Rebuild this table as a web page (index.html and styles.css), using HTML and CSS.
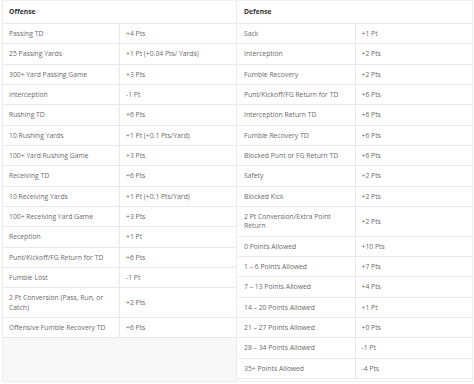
FILE: index.html
```html
<!DOCTYPE html>
<html>
<head>
    <title>Scoring</title>
    <link rel="stylesheet" href="styles.css">
</head>
<body>
    <div class="sheet">
        <div class="panel offense">
            <table class="points">
                <tr><th colspan="2">Offense</th></tr>
                <tr><td>Passing TD</td><td>+4 Pts</td></tr>
                <tr><td>25 Passing Yards</td><td>+1 Pt (+0.04 Pts/ Yards)</td></tr>
                <tr><td>300+ Yard Passing Game</td><td>+3 Pts</td></tr>
                <tr><td>Interception</td><td>-1 Pt</td></tr>
                <tr><td>Rushing TD</td><td>+6 Pts</td></tr>
                <tr><td>10 Rushing Yards</td><td>+1 Pt (+0.1 Pts/Yard)</td></tr>
                <tr><td>100+ Yard Rushing Game</td><td>+3 Pts</td></tr>
                <tr><td>Receiving TD</td><td>+6 Pts</td></tr>
                <tr><td>10 Receiving Yards</td><td>+1 Pt (+0.1 Pts/Yard)</td></tr>
                <tr><td>100+ Receiving Yard Game</td><td>+3 Pts</td></tr>
                <tr><td>Reception</td><td>+1 Pt</td></tr>
                <tr><td>Punt/Kickoff/FG Return for TD</td><td>+6 Pts</td></tr>
                <tr><td>Fumble Lost</td><td>-1 Pt</td></tr>
                <tr><td>2 Pt Conversion (Pass, Run, or Catch)</td><td>+2 Pts</td></tr>
                <tr><td>Offensive Fumble Recovery TD</td><td>+6 Pts</td></tr>
            </table>
        </div>
        <div class="panel defense">
            <table class="points">
                <tr><th colspan="2">Defense</th></tr>
                <tr><td>Sack</td><td>+1 Pt</td></tr>
                <tr><td>Interception</td><td>+2 Pts</td></tr>
                <tr><td>Fumble Recovery</td><td>+2 Pts</td></tr>
                <tr><td>Punt/Kickoff/FG Return for TD</td><td>+6 Pts</td></tr>
                <tr><td>Interception Return TD</td><td>+6 Pts</td></tr>
                <tr><td>Fumble Recovery TD</td><td>+6 Pts</td></tr>
                <tr><td>Blocked Punt or FG Return TD</td><td>+6 Pts</td></tr>
                <tr><td>Safety</td><td>+2 Pts</td></tr>
                <tr><td>Blocked Kick</td><td>+2 Pts</td></tr>
                <tr><td>2 Pt Conversion/Extra Point Return</td><td>+2 Pts</td></tr>
                <tr><td>0 Points Allowed</td><td>+10 Pts</td></tr>
                <tr><td>1 – 6 Points Allowed</td><td>+7 Pts</td></tr>
                <tr><td>7 – 13 Points Allowed</td><td>+4 Pts</td></tr>
                <tr><td>14 – 20 Points Allowed</td><td>+1 Pt</td></tr>
                <tr><td>21 – 27 Points Allowed</td><td>+0 Pts</td></tr>
                <tr><td>28 – 34 Points Allowed</td><td>-1 Pt</td></tr>
                <tr><td>35+ Points Allowed</td><td>-4 Pts</td></tr>
            </table>
        </div>
    </div>
</body>
</html>
```

FILE: styles.css
```css
body {
    margin: 0;
    background: #ffffff;
    font-family: "Open Sans", sans-serif;
}

.sheet {
    display: grid;
    grid-template-columns: 234px 235px;
    gap: 1px;
    margin: 0 3px 0 2px;
    height: 382px;
    border-left: 1px solid #ececec;
    border-bottom: 1px solid #ececec;
    box-sizing: border-box;
}

.panel {
    border-right: 1px solid #ececec;
}

.offense {
    background: #f8f8f8;
}

.defense {
    background: #ffffff;
}

.points {
    width: 100%;
    border-collapse: collapse;
    table-layout: fixed;
    background: #ffffff;
    font-size: 6.8px;
    line-height: 9.33px;
}

.points th {
    text-align: left;
    font-weight: 700;
    color: #333333;
    padding: 6px 6px 6px;
    height: 10px;
    border-top: 1px solid #f0f0f0;
}

.points td {
    color: #6b6b6b;
    padding: 5px 6px;
    border-top: 1px solid #e8e8e8;
    vertical-align: middle;
}

.points td:first-child {
    border-right: 1px solid #e8e8e8;
}

.points tr:last-child td {
    border-bottom: 1px solid #e8e8e8;
}
```
